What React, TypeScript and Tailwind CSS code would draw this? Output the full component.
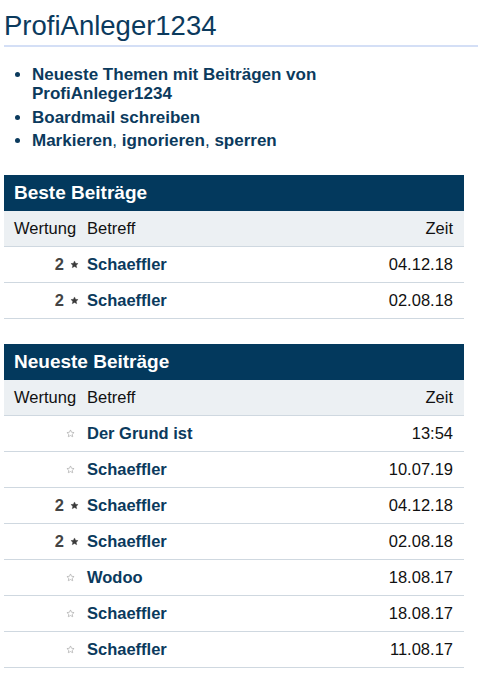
import type { ReactNode } from 'react'

type Post = { rating?: number; subject: string; time: string }

const best: Post[] = [
  { rating: 2, subject: 'Schaeffler', time: '04.12.18' },
  { rating: 2, subject: 'Schaeffler', time: '02.08.18' },
]

const latest: Post[] = [
  { subject: 'Der Grund ist', time: '13:54' },
  { subject: 'Schaeffler', time: '10.07.19' },
  { rating: 2, subject: 'Schaeffler', time: '04.12.18' },
  { rating: 2, subject: 'Schaeffler', time: '02.08.18' },
  { subject: 'Wodoo', time: '18.08.17' },
  { subject: 'Schaeffler', time: '18.08.17' },
  { subject: 'Schaeffler', time: '11.08.17' },
]

function Star({ filled }: { filled: boolean }) {
  return (
    <svg width="9" height="9" viewBox="0 0 24 24" className="inline-block">
      <path
        d="M12 2.5l2.9 6.2 6.6.8-4.9 4.6 1.3 6.6L12 17.4l-5.9 3.3 1.3-6.6-4.9-4.6 6.6-.8z"
        fill={filled ? '#3a3a3a' : 'none'}
        stroke={filled ? '#3a3a3a' : '#b0b0b0'}
        strokeWidth={filled ? 1 : 2}
        strokeLinejoin="round"
      />
    </svg>
  )
}

function Section({ title, posts }: { title: string; posts: Post[] }): ReactNode {
  return (
    <section className="mr-[14px]">
      <h2 className="h-[36px] bg-[#03395d] px-[10px] flex items-center text-[19px] font-bold text-white">
        {title}
      </h2>
      <div className="grid grid-cols-[78px_1fr_auto] h-[36px] items-center bg-[#ecf0f3] border-b border-[#cfd8e0] text-[16.5px] text-[#111]">
        <span className="pl-[10px]">Wertung</span>
        <span className="pl-[5px]">Betreff</span>
        <span className="pr-[11px] text-right">Zeit</span>
      </div>
      {posts.map((p, i) => (
        <div
          key={i}
          className="grid grid-cols-[78px_1fr_auto] h-[36px] items-center border-b border-[#cfd8e0] text-[16.5px]"
        >
          {p.rating ? (
            <span className="flex items-center justify-end gap-[6px] pr-[3px]">
              <b className="text-[#444]">{p.rating}</b>
              <Star filled />
            </span>
          ) : (
            <span className="flex items-center justify-end pr-[7px]">
              <Star filled={false} />
            </span>
          )}
          <a className="pl-[5px] font-bold text-[#0b3a5d]">{p.subject}</a>
          <span className="pr-[11px] text-right text-[#111]">{p.time}</span>
        </div>
      ))}
    </section>
  )
}

export default function App() {
  return (
    <div className="min-h-[674px] bg-white pl-[4px] pt-[10px] font-['Liberation_Sans',Arial,sans-serif]">
      <h1 className="text-[27.5px] leading-[32px] text-[#0b3a5d] pb-[3px] border-b-2 border-[#d4dff6]">
        ProfiAnleger1234
      </h1>

      <ul className="list-disc pl-[28px] mt-[18px] max-w-[420px] text-[17px] leading-[19px] font-bold text-[#0b3a5d] space-y-[4.5px]">
        <li>Neueste Themen mit Beiträgen von ProfiAnleger1234</li>
        <li>Boardmail schreiben</li>
        <li>
          Markieren<span className="font-normal">,</span> ignorieren
          <span className="font-normal">,</span> sperren
        </li>
      </ul>

      <div className="mt-[25px] flex flex-col gap-[25px]">
        <Section title="Beste Beiträge" posts={best} />
        <Section title="Neueste Beiträge" posts={latest} />
      </div>
    </div>
  )
}
